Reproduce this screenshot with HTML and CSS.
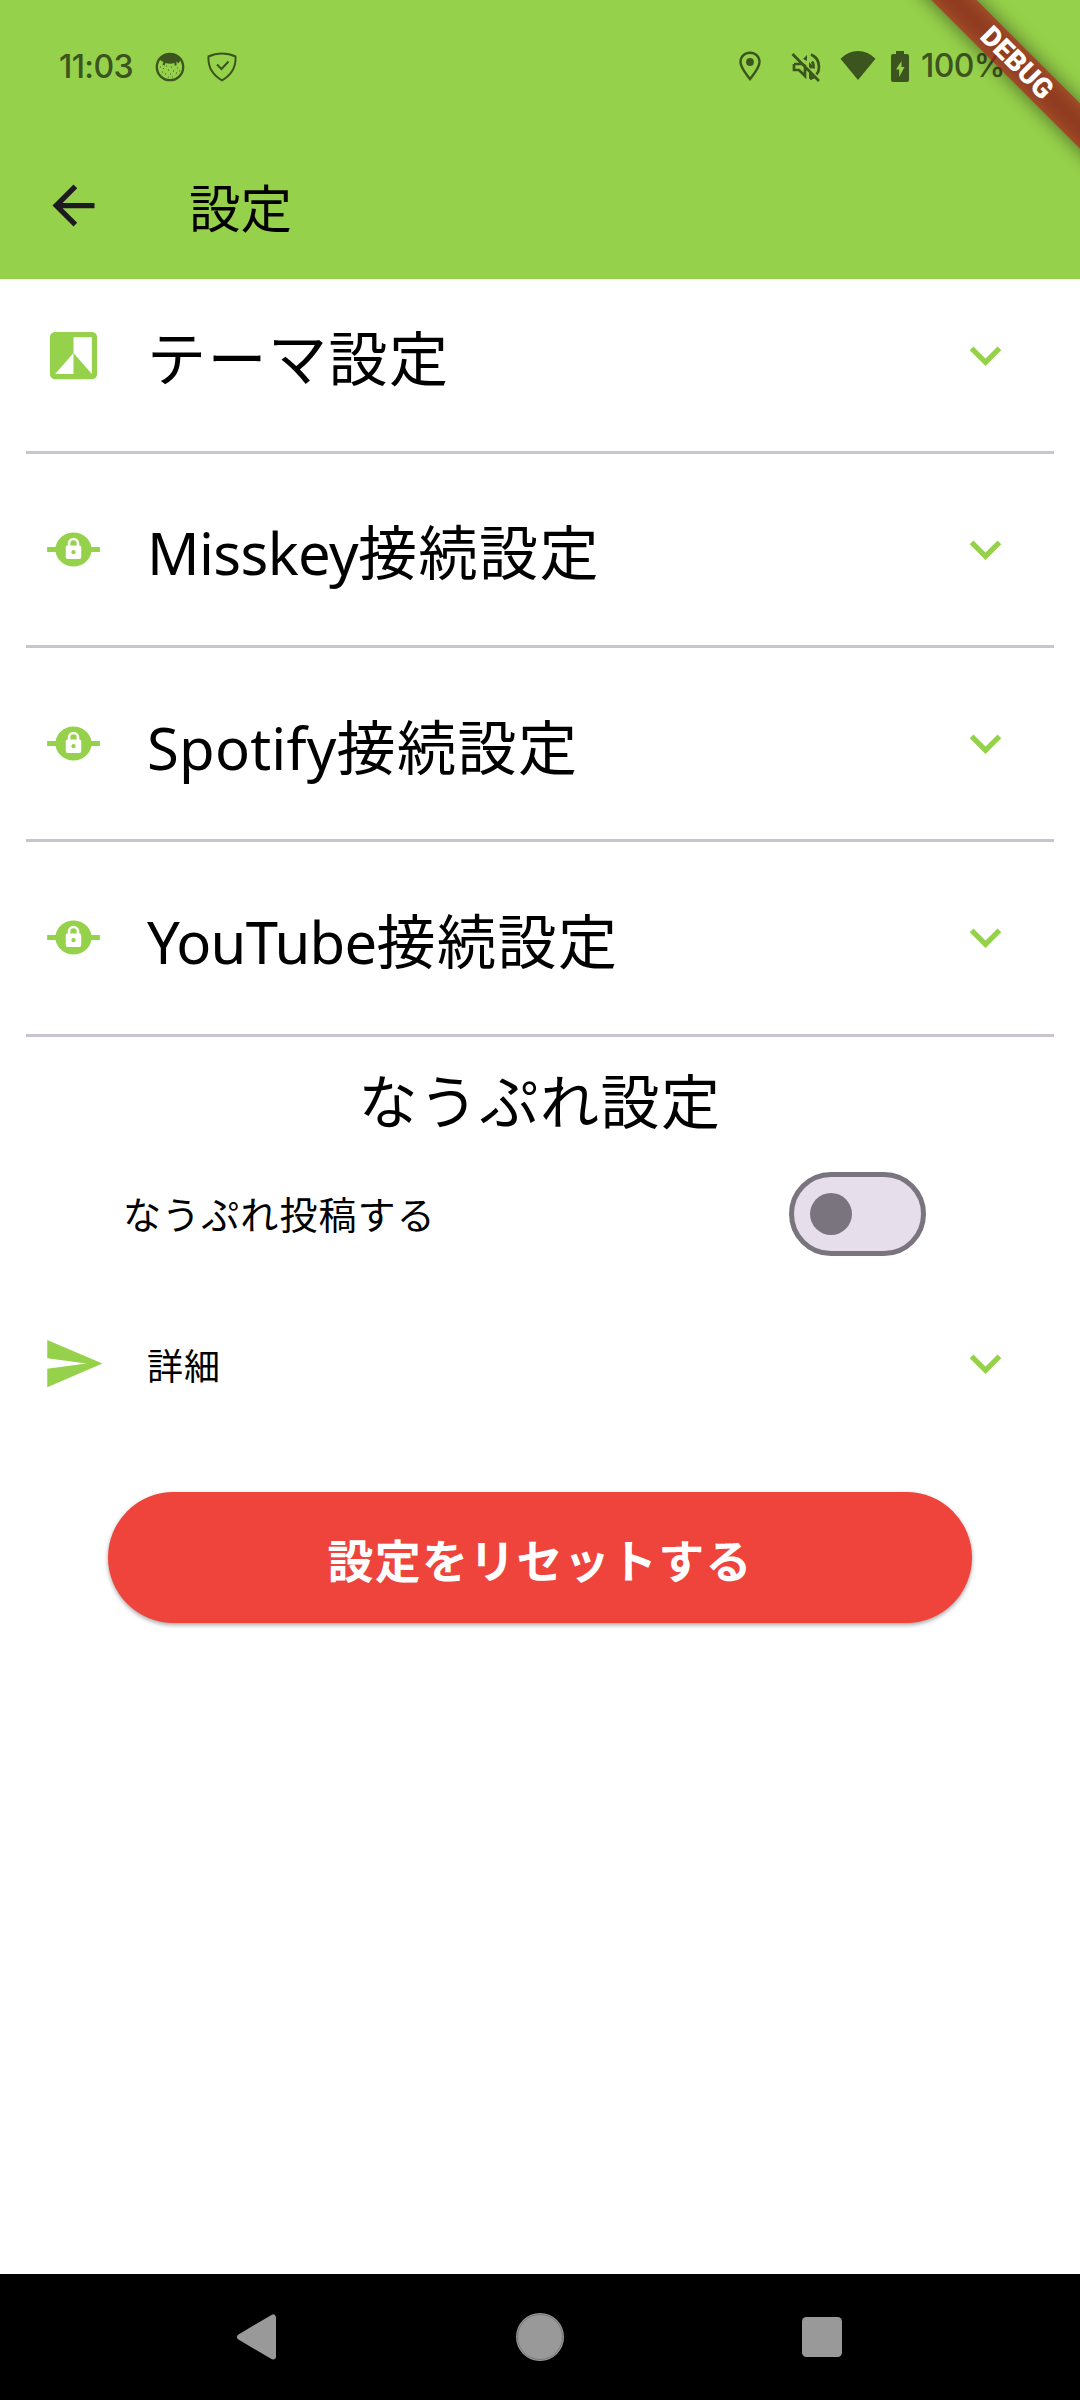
FILE: index.html
```html
<!DOCTYPE html>
<html lang="ja">
<head>
<meta charset="utf-8">
<title>設定</title>
<link rel="stylesheet" href="styles.css">
</head>
<body>
<svg class="defs" aria-hidden="true">
  <symbol id="chevron" viewBox="0 0 24 24"><path d="M16.59 8.59L12 13.17 7.41 8.59 6 10l6 6 6-6z"/></symbol>
  <symbol id="lock" viewBox="0 0 24 24">
    <path d="M1.95 11.05H5.15A7 7 0 0 1 18.85 11.05H22.05V12.95H18.85A7 7 0 0 1 5.15 12.95H1.95z"/>
    <path d="M10.300 10.800V9.700a1.700 1.700 0 0 1 3.400 0v1.100" fill="none" stroke="#fff" stroke-width="1"/>
    <rect x="9.050" y="10.500" width="5.900" height="5.100" rx=".700" fill="#fff"/>
    <circle cx="12" cy="13" r=".8"/>
  </symbol>
</svg>
<div class="screen">
  <header class="header">
    <div class="status">
      <div class="status-left">
        <span class="clock">11:03</span>
        <svg class="face" viewBox="0 0 30 30"><circle cx="15" cy="15" r="13.2" fill="none" stroke="currentColor" stroke-width="2.300"/><path d="M4 7Q15-5 26 7L23.500 11.500 21.500 9.500V13.500H19.500V11Q15 12.500 10.500 11L9.500 13.500 7.500 13 8.500 10 6.500 9z"/><path d="M5 15h.9M7 20h1M11 14h1M13 18h1M16 15h1M18 19h1M22 16h1M21 21h1M10 22h1M15 22h1M13 25h.8M24 19h.8M17 25h.8M8 16.5h.8" stroke="currentColor" stroke-width="1"/></svg>
        <svg class="shield" viewBox="0 0 30 30"><path d="M15 1.400Q22.500 1.400 28.500 4.500Q29.500 20 15 28.300Q.500 20 1.500 4.500Q7.500 1.400 15 1.400zM10 12.500L14.500 17 21.500 9.500" fill="none" stroke="currentColor" stroke-width="2"/></svg>
      </div>
      <div class="status-right">
        <svg class="pin" viewBox="0 0 22 30"><path d="M11 1.700C5.500 1.700 1.500 5.700 1.500 11C1.500 17 7 22.500 11 28C15 22.500 20.500 17 20.500 11C20.500 5.700 16.500 1.700 11 1.700z" fill="none" stroke="currentColor" stroke-width="2.400"/><circle cx="11" cy="11" r="3.900"/></svg>
        <svg class="mute" viewBox="0 0 30 30"><path d="M1.500 2L28 29M3 12V18H8L14 24V14L11.500 12H3M20 2.500Q28 6 28 15Q28 19.500 25.500 22.500M21 9.500Q23 12 22.500 16.500M19 27L23 25" fill="none" stroke="currentColor" stroke-width="2.700"/><path d="M12 7L16 3V9zM18 10L22 14 20 17 18 15zM18 20L22 24 18 27z"/></svg>
        <svg class="wifi" viewBox="0 0 36 30"><path d="M18 30L.500 8.800Q8 1 18 1T35.500 8.800z"/></svg>
        <svg class="battery" viewBox="0 0 18 31"><path fill-rule="evenodd" d="M5 0H13V3H16Q18 3 18 5V29Q18 31 16 31H2Q0 31 0 29V5Q0 3 2 3H5zM10.500 10L5 18.500H8.200V26L13.500 16H10.500z"/></svg>
        <span class="percent">100%</span>
      </div>
    </div>
    <div class="appbar">
      <svg class="icon" viewBox="0 0 24 24"><path d="M20 11H7.830l5.590-5.590L12 4l-8 8 8 8 1.410-1.410L7.830 13H20v-2z"/></svg>
      <h1 class="title">設定</h1>
    </div>
  </header>
  <main class="content">
    <section class="tile">
      <svg class="icon" viewBox="0 0 24 24"><path d="M19 3H5c-1.100 0-2 .900-2 2v14c0 1.100.900 2 2 2h14c1.100 0 2-.900 2-2V5c0-1.100-.900-2-2-2zm0 16l-7-8v8H5l7-8V5h7v14z"/></svg>
      <h2 class="label">テーマ設定</h2>
      <svg class="icon"><use href="#chevron"/></svg>
    </section>
    <hr class="divider">
    <section class="tile">
      <svg class="icon"><use href="#lock"/></svg>
      <h2 class="label"><span class="latin misskey">Misskey</span>接続設定</h2>
      <svg class="icon"><use href="#chevron"/></svg>
    </section>
    <hr class="divider">
    <section class="tile">
      <svg class="icon"><use href="#lock"/></svg>
      <h2 class="label"><span class="latin spotify">Spotify</span>接続設定</h2>
      <svg class="icon"><use href="#chevron"/></svg>
    </section>
    <hr class="divider">
    <section class="tile">
      <svg class="icon"><use href="#lock"/></svg>
      <h2 class="label"><span class="latin youtube">YouTube</span>接続設定</h2>
      <svg class="icon"><use href="#chevron"/></svg>
    </section>
    <hr class="divider">
    <h2 class="heading">なうぷれ設定</h2>
    <div class="switch-row">
      <span class="switch-label">なうぷれ投稿する</span>
      <span class="switch"><span class="thumb"></span></span>
    </div>
    <section class="tile detail">
      <svg class="icon" viewBox="0 0 24 24"><path d="M2.010 21L23 12 2.010 3 2 10l15 2-15 2z"/></svg>
      <span class="small-label">詳細</span>
      <svg class="icon"><use href="#chevron"/></svg>
    </section>
    <button class="reset">設定をリセットする</button>
  </main>
  <nav class="nav">
    <svg viewBox="0 0 50 50"><path d="M7 25L40 5.500V44.500z" stroke="currentColor" stroke-width="6" stroke-linejoin="round"/></svg>
    <svg viewBox="0 0 50 50"><circle cx="25" cy="25" r="24"/><circle cx="25" cy="25" r="22.500" fill="none" stroke="#666" stroke-width=".700"/></svg>
    <svg viewBox="0 0 50 50"><rect x="5" y="5" width="40" height="40" rx="4.500"/></svg>
  </nav>
  <div class="banner-area">
    <div class="banner-shadow"></div>
    <div class="banner">DEBUG</div>
  </div>
</div>
</body>
</html>
```
FILE: styles.css
```css
* { box-sizing: border-box; }
body { margin: 0; background: #fff; font-family: "Noto Sans CJK JP", sans-serif; color: #000; }
h1, h2 { margin: 0; font-weight: 400; }
svg { display: block; fill: currentColor; flex: none; }
.defs { width: 0; height: 0; position: absolute; }
.screen { position: relative; width: 1080px; height: 2400px; display: flex; flex-direction: column; overflow: hidden; }
.header { height: 279px; background: #96d14b; flex: none; }
.status { height: 132px; padding: 0 76px 0 59px; display: flex; justify-content: space-between; align-items: center; color: #3c541e; font: 500 32px/40px "Inter", sans-serif; }
.status-left, .status-right { display: flex; align-items: center; height: 40px; }
.clock { width: 96px; margin-top: 2px; letter-spacing: -.600px; white-space: nowrap; }
.face { width: 30px; height: 30px; margin-top: 2px; }
.shield { width: 30px; height: 30px; margin: 2px 0 0 22px; }
.pin { width: 22px; height: 30px; }
.mute { width: 30px; height: 30px; margin: 2px 0 0 30px; }
.wifi { width: 36px; height: 30px; margin: -2px 0 0 19px; }
.battery { width: 18px; height: 31px; margin: 0 0 0 15px; }
.percent { width: 83px; margin-left: 12px; letter-spacing: -.600px; white-space: nowrap; }
.appbar { height: 147px; display: flex; align-items: center; padding: 0 42px; color: #1d1b20; }
.icon { width: 63px; height: 63px; }
.title { margin: 0 0 0 84px; font-size: 51.500px; line-height: 72px; letter-spacing: 0; color: #000; }
.content { flex: 1; display: flex; flex-direction: column; color: #96d14b; }
.tile { height: 152.250px; padding: 0 63px 0 42px; display: flex; align-items: center; }
.label { flex: 1; margin: 2px 0 0 42px; font-size: 59px; line-height: 84px; letter-spacing: 1.500px; color: #000; white-space: nowrap; }
.latin { font-family: "Noto Sans", sans-serif; font-size: 58px; line-height: 1; }
.misskey { letter-spacing: -.600px; }
.spotify { letter-spacing: .200px; }
.youtube { letter-spacing: -.700px; }
.divider { width: 1028px; height: 3px; margin: 19.500px auto; border: 0; background: #cac4d0; }
.heading { height: 90px; text-align: center; font-size: 59px; line-height: 86px; letter-spacing: 1.500px; color: #000; }
.switch-row { height: 136px; display: flex; align-items: center; justify-content: space-between; padding: 0 154px 0 123px; }
.switch-label { margin-top: -2px; font-size: 38px; line-height: 54px; letter-spacing: 1.100px; color: #000; }
.switch { width: 137px; height: 84px; border: 5.250px solid #79747e; border-radius: 42px; background: #e6deeb; padding: 16px; display: flex; align-items: center; }
.thumb { width: 42px; height: 42px; border-radius: 50%; background: #79747e; }
.detail { margin-top: 5px; }
.small-label { flex: 1; margin: 1px 0 0 42px; font-size: 36px; line-height: 52px; letter-spacing: 1px; color: #000; }
.reset { width: 864px; height: 131px; margin: 53px auto 0; padding: 0; border: 0; border-radius: 66px; background: #ee443b; color: #fff; font: 700 46px/66px "Noto Sans CJK JP", sans-serif; letter-spacing: 1.250px; box-shadow: 0 2px 4px rgba(0,0,0,.35); }
.nav { height: 126px; background: #000; color: #999; display: flex; align-items: center; justify-content: space-between; padding: 0 233px; flex: none; }
.nav svg { width: 50px; height: 50px; }
.banner-area { position: absolute; top: 0; right: 0; width: 240px; height: 240px; overflow: hidden; }
.banner, .banner-shadow { position: absolute; left: 27px; top: 47px; width: 300px; height: 31.500px; transform: rotate(45deg); }
.banner-shadow { background: rgba(0,0,0,.5); filter: blur(9.600px); }
.banner { background: rgba(183,28,28,.627); color: #fff; font: 900 28px/32px Roboto, sans-serif; text-align: center; }
```
